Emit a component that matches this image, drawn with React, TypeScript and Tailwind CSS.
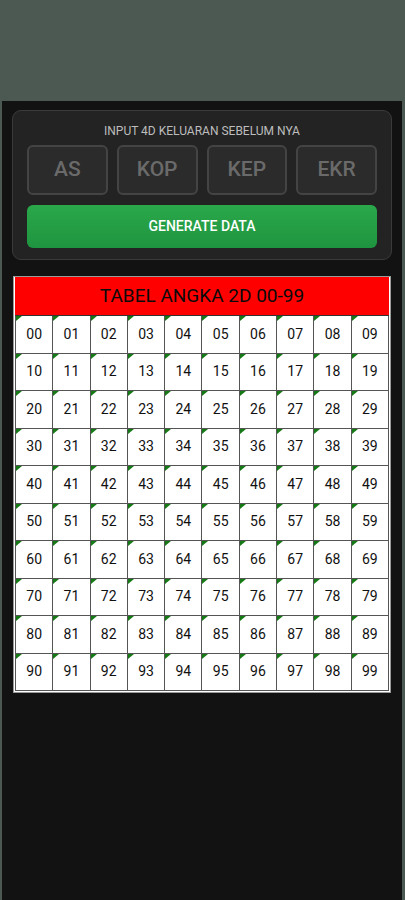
const cells = Array.from({ length: 100 }, (_, i) => String(i).padStart(2, "0"));

function Cell({ value }: { value: string }) {
  return (
    <div className="relative flex h-[37.5px] items-center justify-center border-b border-r border-[#555] bg-white text-[14px] text-[#111]">
      <span className="absolute left-0 top-0 h-0 w-0 border-r-[6px] border-t-[5px] border-r-transparent border-t-[#157a15]" />
      {value}
    </div>
  );
}

export default function App() {
  const inputs = ["AS", "KOP", "KEP", "EKR"];

  return (
    <div
      className="min-h-[900px] bg-[#4b5952] pt-[101px]"
      style={{ fontFamily: "Roboto, 'Liberation Sans', sans-serif" }}
    >
      <main className="ml-[2px] mr-[3px] min-h-[799px] bg-[#121212] px-[10px] pt-[9px]">
        <section className="rounded-[9px] border border-[#3a3a3a] bg-[#232323] px-[14px] pb-[11px] pt-[13px]">
          <p className="text-center text-[12px] leading-[14px] text-[#bdbdbd]">
            INPUT 4D KELUARAN SEBELUM NYA
          </p>
          <div className="mt-[7px] grid grid-cols-4 gap-[9px]">
            {inputs.map((label) => (
              <div
                key={label}
                className="flex h-[50px] items-center justify-center rounded-[6px] border-2 border-[#444] bg-[#2b2b2b] text-[21px] font-medium text-[#6a6a6a]"
              >
                {label}
              </div>
            ))}
          </div>
          <button className="mt-[10px] flex h-[43px] w-full items-center justify-center rounded-[6px] bg-gradient-to-b from-[#2aa84a] to-[#1f9440] text-[14px] font-medium text-white">
            GENERATE DATA
          </button>
        </section>

        <section className="ml-[1px] mr-[1px] mt-[16px] border border-[#9a9a9a] bg-white px-[1px] pb-[1px] pt-0">
          <div className="flex h-[39px] items-center justify-center border-b border-[#333] bg-[#ff0000] text-[19px] text-[#0a0a0a]">
            TABEL ANGKA 2D 00-99
          </div>
          <div className="grid grid-cols-10 border-l border-[#555]">
            {cells.map((c) => (
              <Cell key={c} value={c} />
            ))}
          </div>
        </section>
      </main>
    </div>
  );
}
